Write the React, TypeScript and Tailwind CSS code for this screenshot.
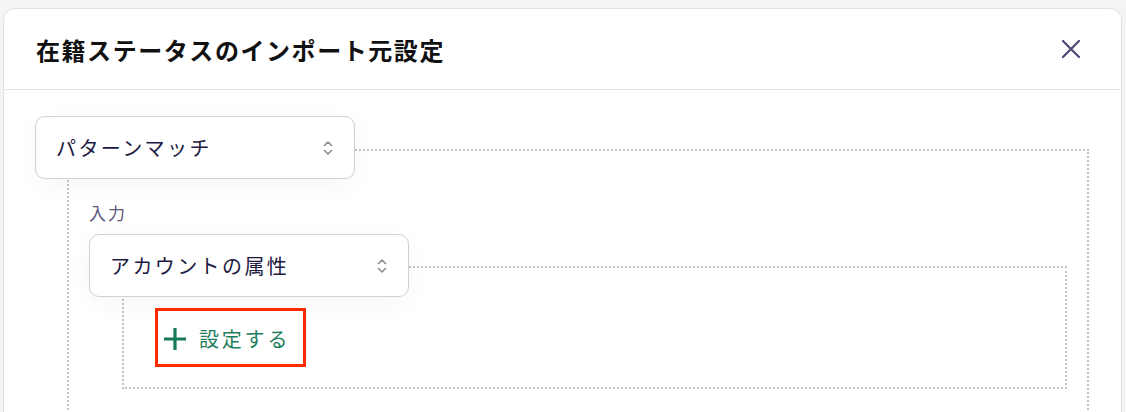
import React from 'react';

const jp = { fontFamily: '"Noto Sans CJK JP", "Noto Sans", sans-serif' };

const UpDown = () => (
  <svg width="12" height="20" viewBox="0 0 12 20" fill="none" stroke="#8b8b95" strokeWidth="1.6" strokeLinecap="round" strokeLinejoin="round">
    <path d="M2.5 7.5 6 4l3.5 3.5" />
    <path d="M2.5 12.5 6 16l3.5-3.5" />
  </svg>
);

const SelectBox = ({ label }: { label: string }) => (
  <div className="relative z-10 flex h-[63px] w-[320px] items-center justify-between rounded-[10px] border border-[#cfcfd6] bg-white pl-5 pr-[20px] shadow-[0_6px_24px_rgba(0,0,0,0.04)]">
    <span className="text-[20px] tracking-[0.12em] text-[#1c1942]">{label}</span>
    <UpDown />
  </div>
);

const App: React.FC = () => {
  return (
    <div className="h-[412px] w-[1126px] overflow-hidden bg-[#f4f4f6] pl-[3px] pt-[8px]" style={jp}>
      <div className="h-[420px] w-[1119px] rounded-t-[12px] border border-[#e1e1e6] bg-white">
        {/* header */}
        <div className="flex h-[81px] items-center justify-between border-b border-[#e3e3e8] pl-[32px] pr-[40px]">
          <h2 className="pt-[2px] text-[24px] font-bold tracking-[0.065em] text-[#111]">在籍ステータスのインポート元設定</h2>
          <svg width="20" height="20" viewBox="0 0 20 20" stroke="#4b4672" strokeWidth="2.2" strokeLinecap="round">
            <path d="M2 2l16 16M18 2 2 18" />
          </svg>
        </div>

        {/* body */}
        <div className="pl-[31px] pr-[32px] pt-[26px]">
          <SelectBox label="パターンマッチ" />
          <div className="-mt-[30px] ml-[32px] h-[400px] border-2 border-dotted border-[#c2c2c8] pl-[20px] pr-[20px] pt-[50px]">
            <div className="mb-[10px] text-[17px] leading-[23px] tracking-[0.12em] text-[#5c5878]">入力</div>
            <SelectBox label="アカウントの属性" />
            <div className="-mt-[31px] ml-[33px] border-2 border-dotted border-[#c2c2c8] pb-[20px] pl-[31px] pt-[40px]">
              <div className="flex h-[59px] w-[151px] items-center gap-[12px] border-[3px] border-[#ff2a00] pl-[5px] pt-[3px]">
                <svg width="24" height="24" viewBox="0 0 24 24" stroke="#17785a" strokeWidth="3.2">
                  <path d="M12 1v22M1 12h22" />
                </svg>
                <span className="text-[20px] tracking-[0.14em] text-[#1f7d5d]">設定する</span>
              </div>
            </div>
          </div>
        </div>
      </div>
    </div>
  );
};

export default App;
